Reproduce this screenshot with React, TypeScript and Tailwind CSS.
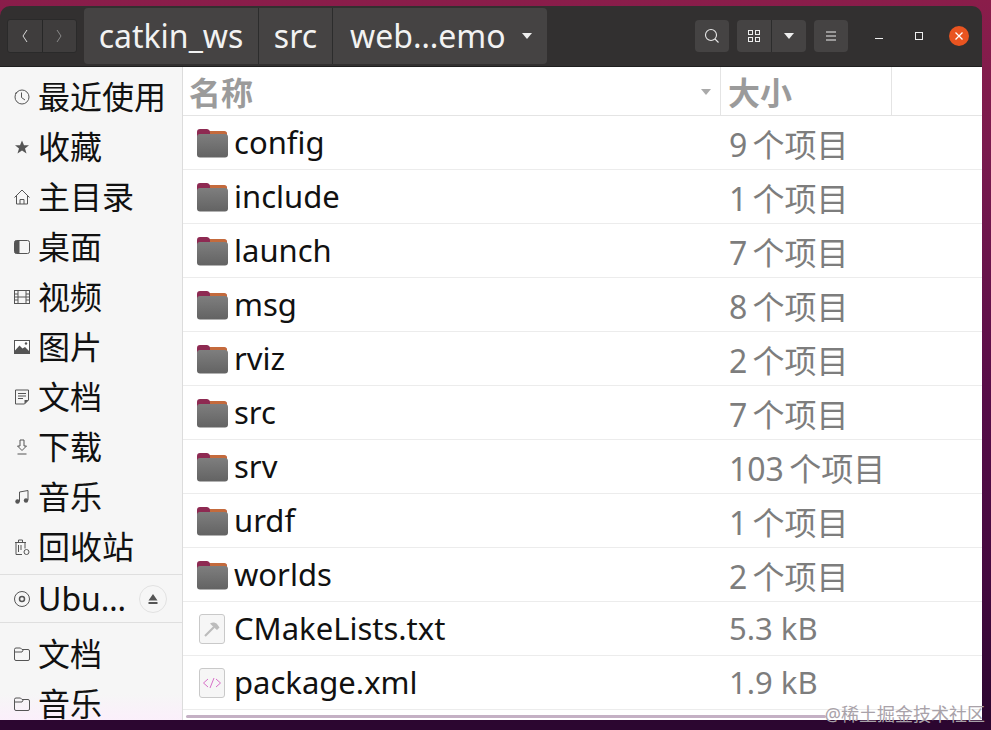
import type { ReactNode } from "react"

const FONT = { fontFamily: '"Noto Sans", "Noto Sans CJK SC", sans-serif' }

const Glyph = ({ children }: { children: ReactNode }) => (
    <svg width="16" height="16" viewBox="0 0 16 16" fill="none" stroke="#555" strokeWidth="1" className="shrink-0">
        {children}
    </svg>
)

const icons: Record<string, ReactNode> = {
    recent: <Glyph><circle cx="8" cy="8" r="7" /><path d="M7.500 3.500v5l3.500 2.500M1 4.500l2-1" /></Glyph>,
    star: <Glyph><path fill="#555" stroke="none" d="M8 1.500l2 4.700h5l-4 3.200 1.500 5L8 11.500l-4.500 2.900 1.500-5-4-3.200h5z" /></Glyph>,
    home: <Glyph><path d="M.5 8.500L8 1l7.500 7.500M2.500 7v8h11V7M6 15v-4.500h4V15" /></Glyph>,
    desktop: <Glyph><rect x=".5" y="1.500" width="15" height="13" rx="2" /><path fill="#555" stroke="none" d="M2.500 1.500h3v13h-3a2 2 0 0 1-2-2v-9a2 2 0 0 1 2-2z" /></Glyph>,
    video: <Glyph><rect x=".5" y="1.500" width="15" height="13" /><path d="M4 1.500v13M12 1.500v13M4 8h8M.5 5h3.500M.5 8h3.500M.5 11h3.500M12 5h3.500M12 8h3.500M12 11h3.500" /></Glyph>,
    picture: <Glyph><rect x=".5" y="1.500" width="15" height="13" fill="#fff" /><path fill="#555" stroke="none" d="M1 14v-2.500l4.500-5 3 3 2.500-1.500 4 4V14z" /><circle cx="12" cy="4.500" r="1.200" fill="#555" stroke="none" /></Glyph>,
    doc: <Glyph><path d="M1.500 1h13v10l-4 4h-9zM4 4.500h8M4 7h8M4 9.500h5" /><path fill="#555" stroke="none" d="M14.500 11l-4 4v-4z" /></Glyph>,
    download: <Glyph><path d="M6 1h4v6h2.500L8 11.500 3.500 7H6zM3.500 15h9" /></Glyph>,
    music: <Glyph><path d="M5.500 12.500V3l8.500-1.500v9.500" /><circle cx="3.500" cy="12.500" r="2.200" fill="#555" stroke="none" /><circle cx="12" cy="11.500" r="2.200" fill="#555" stroke="none" /></Glyph>,
    trash: <Glyph><path d="M1 3.500h11M4.500 3.500V1h4v2.500M2 3.500v12h6M11 3.500v6M4.500 6v7M7 6v5" /><circle cx="12.500" cy="13" r="2.500" /></Glyph>,
    disc: <Glyph><circle cx="8" cy="8" r="7.500" /><circle cx="8" cy="8" r="2.500" strokeWidth="1.500" /></Glyph>,
    folder: <Glyph><path d="M2 2h4.500L8 3.500h6a1.500 1.500 0 0 1 1.500 1.500v8a1.500 1.500 0 0 1-1.500 1.500H2A1.500 1.500 0 0 1 .5 13V3.500A1.500 1.500 0 0 1 2 2zM.5 6H8l1.500-2.500" /></Glyph>,
}

const SideItem = ({ icon, label }: { icon: string; label: string }) => (
    <div className="flex h-[50px] shrink-0 items-center pl-[14px]">
        {icons[icon]}
        <span className="ml-[8px] text-[32px] leading-none text-[#111]">{label}</span>
    </div>
)

const FolderIcon = () => (
    <svg width="32" height="30" viewBox="0 0 32 30" className="shrink-0">
        <defs>
            <linearGradient id="folderBody" x1="0" y1="0" x2="0" y2="1">
                <stop offset="0" stopColor="#7e7e7e" />
                <stop offset="1" stopColor="#636363" />
            </linearGradient>
        </defs>
        <path fill="#8e2a52" d="M1 4a3 3 0 0 1 3-3h7a3 3 0 0 1 2.500 1.500l.5 1h14a3 3 0 0 1 3 3V12H1z" />
        <path fill="#c46a3c" d="M14 3h14a3 3 0 0 1 3 3v1H14z" />
        <rect x="1" y="6" width="31" height="23.500" rx="3" fill="url(#folderBody)" />
    </svg>
)

const FileIcon = ({ children }: { children: ReactNode }) => (
    <div className="ml-[3px] mr-[3px] flex h-[30px] w-[26px] shrink-0 items-center justify-center rounded-[3px] border border-[#c9c9c9] bg-[#f6f6f6]">
        {children}
    </div>
)

const Row = ({ icon, name, size, count }: { icon: ReactNode; name: string; size: string; count?: boolean }) => (
    <div className="flex h-[54px] items-center border-b border-[#ececec]">
        <div className="flex w-[537px] items-center pl-[13px]">
            {icon}
            <span className="ml-[6px] text-[31px] leading-none text-[#111]">{name}</span>
        </div>
        {count ? (
            <span className="pl-[9px] pt-[4px] text-[32px] leading-none text-[#7d7d7d] [word-spacing:-3px]">{size}</span>
        ) : (
            <span className="pl-[9px] text-[31px] leading-none text-[#7d7d7d]">{size}</span>
        )}
    </div>
)

const folders = [
    ["config", "9 个项目"],
    ["include", "1 个项目"],
    ["launch", "7 个项目"],
    ["msg", "8 个项目"],
    ["rviz", "2 个项目"],
    ["src", "7 个项目"],
    ["srv", "103 个项目"],
    ["urdf", "1 个项目"],
    ["worlds", "2 个项目"],
]

export default function App() {
    return (
        <div className="relative h-[730px] w-[991px] overflow-hidden bg-[linear-gradient(180deg,#8a1d4a_0%,#7a1a4e_20%,#560c48_55%,#43093f_80%,#2c0630_98%)]" style={FONT}>
            <div className="mr-[9px] pt-[6px]">
                <div className="flex h-[61px] items-center rounded-t-[10px] border-b border-[#1f1f1f] bg-[#323030] pl-[7px] pr-[13px]">
                    <div className="flex h-[34px] w-[70px] rounded-[3px] border border-[#2a2a2a] bg-[#3f3d3d]">
                        <div className="flex flex-1 items-center justify-center border-r border-[#272727]">
                            <svg width="10" height="16" viewBox="0 0 10 16" fill="none" stroke="#d8d8d8"><path d="M7 2L3 8l4 6" /></svg>
                        </div>
                        <div className="flex flex-1 items-center justify-center">
                            <svg width="10" height="16" viewBox="0 0 10 16" fill="none" stroke="#8a8a8a"><path d="M3 2l4 6-4 6" /></svg>
                        </div>
                    </div>

                    <div className="ml-[7px] flex h-[56px] w-[463px] rounded-[4px] bg-[#454343] text-[32px] leading-none text-[#f2f2f2]">
                        <div className="flex w-[175px] items-center justify-center border-r border-[#2c2c2c]">catkin_ws</div>
                        <div className="flex w-[74px] items-center justify-center border-r border-[#2c2c2c]">src</div>
                        <div className="flex flex-1 items-center pl-[17px]">
                            web…emo
                            <svg width="10" height="6" viewBox="0 0 10 6" className="ml-[16px]"><path fill="#eee" d="M0 0h10L5 6z" /></svg>
                        </div>
                    </div>

                    <div className="ml-auto flex items-center">
                        <div className="flex h-[32px] w-[34px] items-center justify-center rounded-[4px] bg-[#454343]">
                            <svg width="16" height="16" viewBox="0 0 16 16" fill="none" stroke="#e8e8e8" strokeWidth="1.100"><circle cx="7" cy="7" r="5.500" /><path d="M11 11l3.500 3.500" /></svg>
                        </div>
                        <div className="ml-[8px] flex h-[32px] w-[69px] rounded-[4px] bg-[#454343]">
                            <div className="flex w-[35px] items-center justify-center border-r border-[#2c2c2c]">
                                <svg width="14" height="14" viewBox="0 0 14 14" fill="none" stroke="#eee"><rect x="1.500" y="1.500" width="4" height="4" /><rect x="8.500" y="1.500" width="4" height="4" /><rect x="1.500" y="8.500" width="4" height="4" /><rect x="8.500" y="8.500" width="4" height="4" /></svg>
                            </div>
                            <div className="flex flex-1 items-center justify-center">
                                <svg width="10" height="6" viewBox="0 0 10 6"><path fill="#eee" d="M0 0h10L5 6z" /></svg>
                            </div>
                        </div>
                        <div className="ml-[8px] flex h-[32px] w-[34px] items-center justify-center rounded-[4px] bg-[#454343]">
                            <svg width="12" height="12" viewBox="0 0 12 12" stroke="#eee"><path d="M1 2h10M1 6h10M1 10h10" /></svg>
                        </div>
                        <div className="flex w-[35px] justify-end">
                            <div className="mt-[5px] h-px w-[8px] bg-[#eee]" />
                        </div>
                        <div className="ml-[32px] h-[8px] w-[8px] border border-[#eee]" />
                        <div className="ml-[26px] flex h-[20px] w-[20px] items-center justify-center rounded-full bg-[#e95420]">
                            <svg width="10" height="10" viewBox="0 0 10 10" stroke="#fff" strokeWidth="1.300"><path d="M1.500 1.500l7 7M8.500 1.500l-7 7" /></svg>
                        </div>
                    </div>
                </div>

                <div className="flex h-[653px] bg-white">
                    <aside className="flex w-[183px] shrink-0 flex-col overflow-hidden border-r border-[#dcdcdc] bg-[linear-gradient(180deg,#f6f6f6_96%,#fbeffb_100%)] pt-[5px]">
                        <SideItem icon="recent" label="最近使用" />
                        <SideItem icon="star" label="收藏" />
                        <SideItem icon="home" label="主目录" />
                        <SideItem icon="desktop" label="桌面" />
                        <SideItem icon="video" label="视频" />
                        <SideItem icon="picture" label="图片" />
                        <SideItem icon="doc" label="文档" />
                        <SideItem icon="download" label="下载" />
                        <SideItem icon="music" label="音乐" />
                        <SideItem icon="trash" label="回收站" />
                        <div className="mt-[2px] flex h-[49px] shrink-0 items-center border-y border-[#dfdfdf] pl-[14px]">
                            {icons.disc}
                            <span className="ml-[8px] text-[32px] leading-none text-[#111]">Ubu…</span>
                            <div className="ml-auto mr-[15px] flex h-[28px] w-[28px] items-center justify-center rounded-full border border-[#e2e2e2]">
                                <svg width="10" height="10" viewBox="0 0 10 10"><path fill="#555" d="M5 0l4.500 6.500h-9zM.5 8h9v2h-9z" /></svg>
                            </div>
                        </div>
                        <div className="pt-[6px]">
                            <SideItem icon="folder" label="文档" />
                            <SideItem icon="folder" label="音乐" />
                        </div>
                    </aside>

                    <main className="relative min-w-0 flex-1 overflow-hidden">
                        <div className="flex h-[49px] border-b border-[#e4e4e4] text-[32px] font-bold leading-none text-[#9b9b9b]">
                            <div className="relative flex w-[538px] items-center border-r border-[#e4e4e4] pl-[6px] pt-[4px]">
                                名称
                                <svg width="10" height="6" viewBox="0 0 10 6" className="absolute right-[9px] top-[22px]"><path fill="#aaa" d="M0 0h10L5 6z" /></svg>
                            </div>
                            <div className="flex w-[171px] items-center border-r border-[#e4e4e4] pl-[7px] pt-[4px]">大小</div>
                        </div>
                        {folders.map(([name, size]) => (
                            <Row key={name} icon={<FolderIcon />} name={name} size={size} count />
                        ))}
                        <Row
                            name="CMakeLists.txt"
                            size="5.3 kB"
                            icon={
                                <FileIcon>
                                    <svg width="18" height="18" viewBox="0 0 18 18" fill="none"><path stroke="#bcbcbc" strokeWidth="2.200" d="M2 16l9-9" /><path fill="#bcbcbc" d="M7 3.500c3-1.500 5-1 7 .5l2.500 3.500-2.500 2.500L11 7.500 9.500 6z" /></svg>
                                </FileIcon>
                            }
                        />
                        <Row
                            name="package.xml"
                            size="1.9 kB"
                            icon={
                                <FileIcon>
                                    <svg width="20" height="12" viewBox="0 0 20 12" fill="none" stroke="#d86fc8"><path d="M6 2L1.500 6 6 10M12 1L8 11M14 2l4.500 4L14 10" /></svg>
                                </FileIcon>
                            }
                        />
                        <div className="absolute bottom-[2px] left-[3px] h-[3px] w-[640px] rounded-full bg-[#c4b0c4]" />
                    </main>
                </div>
            </div>

            <div className="absolute bottom-[7px] right-[6px] text-[18px] leading-none text-[#a9a2a9]">@稀土掘金技术社区</div>
        </div>
    )
}
